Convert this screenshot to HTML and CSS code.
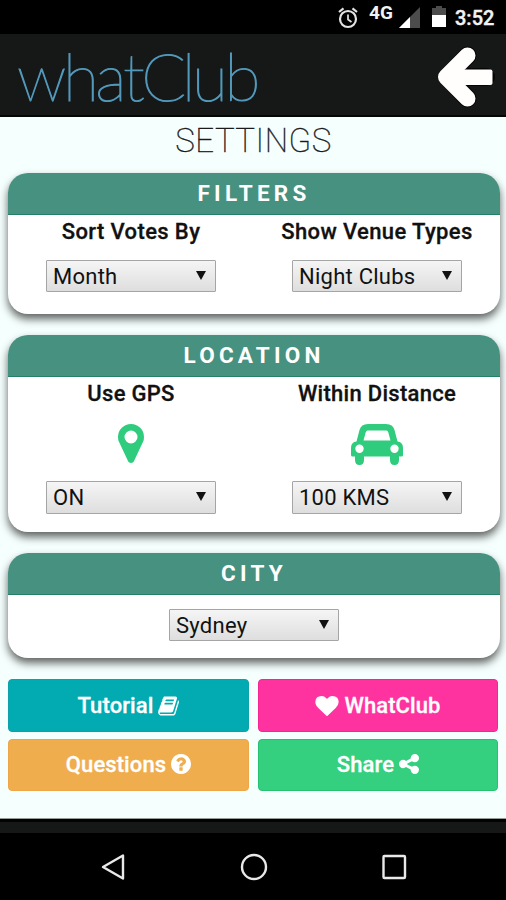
FILE: index.html
```html
<!DOCTYPE html>
<html lang="en">
<head>
<meta charset="utf-8">
<title>whatClub – Settings</title>
<link rel="stylesheet" href="styles.css">
</head>
<body>
<div class="status">
  <svg class="alarm" width="20" height="22" viewBox="0 0 20 22" fill="none" stroke="#e4e4e4"><circle cx="10" cy="12" r="8" stroke-width="2.2"/><path d="M10 7.5v5l3.500 2.500" stroke-width="1.7"/><path d="M1 5l4.500-3.700M19 5l-4.500-3.700" stroke-width="2.2"/></svg>
  <span class="net">4G</span>
  <svg class="signal" width="21" height="21" viewBox="0 0 21 21"><path d="M21 0v21H0z" fill="#4c4c4c"/><path d="M11 10v11H0z" fill="#fff"/></svg>
  <svg class="battery" width="14" height="21" viewBox="0 0 14 21"><path d="M0 2h4V0h6v2h4v8H0z" fill="#4c4c4c"/><path d="M0 9h14v12H0z" fill="#fff"/></svg>
  <span class="time">3:52</span>
</div>
<header class="bar">
  <div class="logo">what<span class="logo-c">C</span>lub</div>
  <svg class="back" width="60" height="66" viewBox="0 0 60 66"><g fill="none" stroke-linejoin="round" stroke-linecap="round"><path d="M32.500 11.500L12 33l20.500 21.500M21 33h30" stroke="#050505" stroke-width="18"/><path d="M32.500 11.500L11 33l21.500 21.500" stroke="#fffefd" stroke-width="16"/></g><rect x="14" y="25.500" width="43.500" height="15.500" rx="2" fill="#fffefd"/></svg>
</header>
<main class="page">
  <h1>SETTINGS</h1>
  <section class="card filters">
    <h2>FILTERS</h2>
    <div class="cols">
      <div class="col"><h3>Sort Votes By</h3><div class="select">Month<i></i></div></div>
      <div class="col"><h3>Show Venue Types</h3><div class="select">Night Clubs<i></i></div></div>
    </div>
  </section>
  <section class="card location">
    <h2>LOCATION</h2>
    <div class="cols">
      <div class="col"><h3>Use GPS</h3>
        <div class="pic"><svg width="26" height="39" viewBox="384 128 1024 1536" fill="#2ecc7c"><path d="M1152 640q0-106-75-181t-181-75-181 75-75 181 75 181 181 75 181-75 75-181zm256 0q0 109-33 179l-364 774q-16 33-47.500 52t-67.500 19-67.500-19-46.500-52l-365-774q-33-70-33-179 0-212 150-362t362-150 362 150 150 362z"/></svg></div>
        <div class="select tall">ON<i></i></div></div>
      <div class="col"><h3>Within Distance</h3>
        <div class="pic"><svg width="52" height="41" viewBox="0 0 52 41" fill="#2ecc7c" fill-rule="evenodd"><path d="M17 0h18q7 0 8.500 6l3 11.500Q52 18 52 24v7q0 1.500-1.500 1.500H48V36q0 5-4.500 5T39 36v-3.500H13V36q0 5-4.500 5T4 36v-3.500H1.500Q0 32.500 0 31v-7q0-6 5.500-6.500L8.500 6Q10 0 17 0zM16.500 6.500q-1.300 0-1.700 1.500l-2.300 8.500h27L37.200 8q-.4-1.500-1.700-1.500zM8.500 20.500a4.200 4.200 0 1 0 0 8.400a4.200 4.200 0 1 0 0-8.400zM43.500 20.500a4.200 4.200 0 1 0 0 8.400a4.200 4.200 0 1 0 0-8.400z"/></svg></div>
        <div class="select tall">100 KMS<i></i></div></div>
    </div>
  </section>
  <section class="card city">
    <h2>CITY</h2>
    <div class="cols"><div class="col"><div class="select">Sydney<i></i></div></div></div>
  </section>
  <nav class="buttons">
    <a class="btn teal"><span>Tutorial</span><svg width="21" height="20" viewBox="50 128 1680 1536"><path d="M1703 478q40 57 18 129l-275 906q-19 64-76.500 107.500t-122.500 43.500h-923q-77 0-148.500-53.500t-99.500-131.500q-24-67-2-127 0-4 3-27t4-37q1-8-3-21.500t-3-19.500q2-11 8-21t16.500-23.500 16.500-23.500q23-38 45-91.500t30-91.500q3-10 .5-30t-.5-28q3-11 17-28t17-23q21-36 42-92t25-90q1-9-2.500-32t.5-28q4-13 22-30.500t22-22.500q19-26 42.500-84.500t27.500-96.500q1-8-3-25.500t-2-26.500q2-8 9-18t18-23 17-21q8-12 16.500-30.500t15-35 16-36 19.500-32 26.500-23.500 36-11.500 47.500 5.500l-1 3q38-9 51-9h761q74 0 114 56t18 130l-274 906q-36 119-71.500 153.500t-128.500 34.500h-869q-27 0-38 15-11 16-1 43 24 70 144 70h923q29 0 56-15.500t35-41.500l300-987q7-22 5-57 38 15 59 43zm-1064 2q-4 13 2 22.500t20 9.500h608q13 0 25.500-9.500t16.500-22.500l21-64q4-13-2-22.500t-20-9.500h-608q-13 0-25.500 9.500t-16.500 22.500zm-83 256q-4 13 2 22.500t20 9.500h608q13 0 25.500-9.500t16.500-22.500l21-64q4-13-2-22.500t-20-9.500h-608q-13 0-25.500 9.500t-16.500 22.500z"/></svg></a>
    <a class="btn pink"><svg width="24" height="20" viewBox="0 128 1792 1536"><path d="M896 1664q-26 0-44-18l-624-602q-10-8-27.500-26t-55.500-65.500-68-97.500-53.500-121-23.500-138q0-220 127-344t351-124q62 0 126.500 21.500t120 58 95.500 68.500 76 68q36-36 76-68t95.500-68.500 120-58 126.500-21.500q224 0 351 124t127 344q0 221-229 450l-623 600q-18 18-44 18z"/></svg><span>WhatClub</span></a>
    <a class="btn orange"><span>Questions</span><svg width="20" height="20" viewBox="128 128 1536 1536"><path d="M1024 1376v-192q0-14-9-23t-23-9h-192q-14 0-23 9t-9 23v192q0 14 9 23t23 9h192q14 0 23-9t9-23zm256-672q0-88-55.500-163t-138.500-116-170-41q-243 0-371 213-15 24 8 42l132 100q7 6 19 6 16 0 25-12 53-68 86-92 34-24 86-24 48 0 85.500 26t37.500 59q0 38-20 61t-68 45q-63 28-115.500 86.500t-52.500 125.500v36q0 14 9 23t23 9h192q14 0 23-9t9-23q0-19 21.500-49.500t54.500-49.500q32-18 49-28.500t46-35 44.500-48 28-60.500 12.500-81zm384 192q0 209-103 385.500t-279.500 279.500-385.500 103-385.500-103-279.500-279.500-103-385.500 103-385.500 279.500-279.500 385.500-103 385.500 103 279.500 279.500 103 385.500z"/></svg></a>
    <a class="btn green"><span>Share</span><svg width="20" height="20" viewBox="128 128 1536 1536"><path d="M1344 1024q133 0 226.500 93.500t93.500 226.500-93.500 226.500-226.500 93.500-226.500-93.500-93.500-226.500q0-12 2-34l-360-180q-92 86-218 86-133 0-226.500-93.500t-93.500-226.500 93.500-226.500 226.500-93.500q126 0 218 86l360-180q-2-22-2-34 0-133 93.500-226.500t226.500-93.500 226.500 93.500 93.500 226.500-93.500 226.500-226.500 93.500q-126 0-218-86l-360 180q2 22 2 34t-2 34l360 180q92-86 218-86z"/></svg></a>
  </nav>
</main>
<div class="strip"></div>
<footer class="nav">
  <svg width="26" height="28" viewBox="0 0 26 28"><path d="M3 14L23 2.500v23z"/></svg>
  <svg width="28" height="28" viewBox="0 0 28 28"><circle cx="14" cy="14" r="12"/></svg>
  <svg width="26" height="28" viewBox="0 0 26 28"><rect x="2.500" y="3" width="21.500" height="22" rx="1"/></svg>
</footer>
</body>
</html>
```
FILE: styles.css
```css
* { box-sizing: border-box; }
body { margin: 0; width: 506px; height: 900px; overflow: hidden; background: #000; font-family: Roboto, "Liberation Sans", sans-serif; color: #111; }
h1, h2, h3 { margin: 0; }
svg { display: block; flex: none; }

.status { height: 34px; display: flex; align-items: flex-start; padding: 7px 0 0 338px; color: #f2f2f2; }
.net { font-weight: 700; font-size: 19px; line-height: 22px; margin: -5px 0 0 11px; width: 24px; }
.signal { margin-left: 6px; }
.battery { margin: -1px 0 0 12px; }
.time { font-size: 20px; font-weight: 500; line-height: 22px; margin-left: 9px; -webkit-text-stroke: .4px #f2f2f2; }

.bar { height: 83px; background: #151817; border-bottom: 2px solid #050606; display: flex; justify-content: space-between; padding: 0 11px 0 17px; }
.logo { font-family: Lato, sans-serif; font-weight: 100; font-size: 66px; line-height: 83px; letter-spacing: -3.4px; color: #5eafd6; -webkit-text-stroke: 1.200px #5298bb; white-space: nowrap; }
.logo-c { letter-spacing: -4.500px; }
.back { margin: 10px 0 0; }

.page { height: 702px; background: #f5fffd; border-bottom: 1px solid #969c9a; padding: 0 7px 0 8px; }
h1 { height: 56px; font-weight: 100; font-size: 33px; line-height: 48px; letter-spacing: .5px; text-align: center; -webkit-text-stroke: .4px #222; }
.card { width: 492px; border-radius: 20px; background: #fff; overflow: hidden; margin-bottom: 21px; box-shadow: 0 5px 9px rgba(0,0,0,.62); }
.filters { height: 141px; }
.location { height: 197px; }
.city { height: 105px; }
h2 { height: 42px; background: #479180; border-bottom: 1px solid #258069; color: #fff; font-size: 22.500px; font-weight: 700; line-height: 40px; letter-spacing: 4.200px; text-align: center; }
.cols { display: flex; }
.col { flex: 1; display: flex; flex-direction: column; align-items: center; }
h3 { font-size: 22px; font-weight: 500; line-height: 34px; height: 45px; letter-spacing: .38px; white-space: nowrap; -webkit-text-stroke: .3px #111; }
.location h3 { letter-spacing: .28px; line-height: 33px; }
.pic { height: 58.500px; padding-top: 2px; }
.select { width: 170px; height: 32px; border: 1px solid #a5a5a5; border-radius: 1px; background: linear-gradient(#f5f5f5, #dedede); display: flex; justify-content: space-between; align-items: center; padding: 2px 9px 0 6px; font-size: 22px; line-height: 30px; letter-spacing: .25px; }
.tall { height: 33px; }
.select i { width: 10px; height: 9px; margin-top: -3px; background: #111; clip-path: polygon(0 0, 100% 0, 50% 100%); }
.city .select { margin-top: 14px; }

.buttons { display: grid; grid-template-columns: 241px 240px; grid-template-rows: 53px 52px; gap: 7px 9px; }
.btn { display: flex; align-items: center; justify-content: center; gap: 5px; border-radius: 4px; color: #fff; font-size: 22px; font-weight: 500; letter-spacing: .1px; -webkit-text-stroke: .3px #fff; }
.btn svg { fill: #fff; }
.teal { background: #02abb1; border: 1px solid #0ba3a9; }
.pink { background: #ff339f; border: 1px solid #f72594; }
.orange { background: #f0ad4e; border: 1px solid #eea748; padding-bottom: 2px; }
.green { background: #34d080; border: 1px solid #27c172; padding-bottom: 2px; }

.strip { height: 14px; background: #151817; border-top: 3px solid #020202; }
.nav { height: 67px; display: flex; justify-content: space-between; padding: 20px 99px 0 100px; }
.nav svg { fill: none; stroke: #e9e9e9; stroke-width: 2.400; stroke-linejoin: round; }
```
